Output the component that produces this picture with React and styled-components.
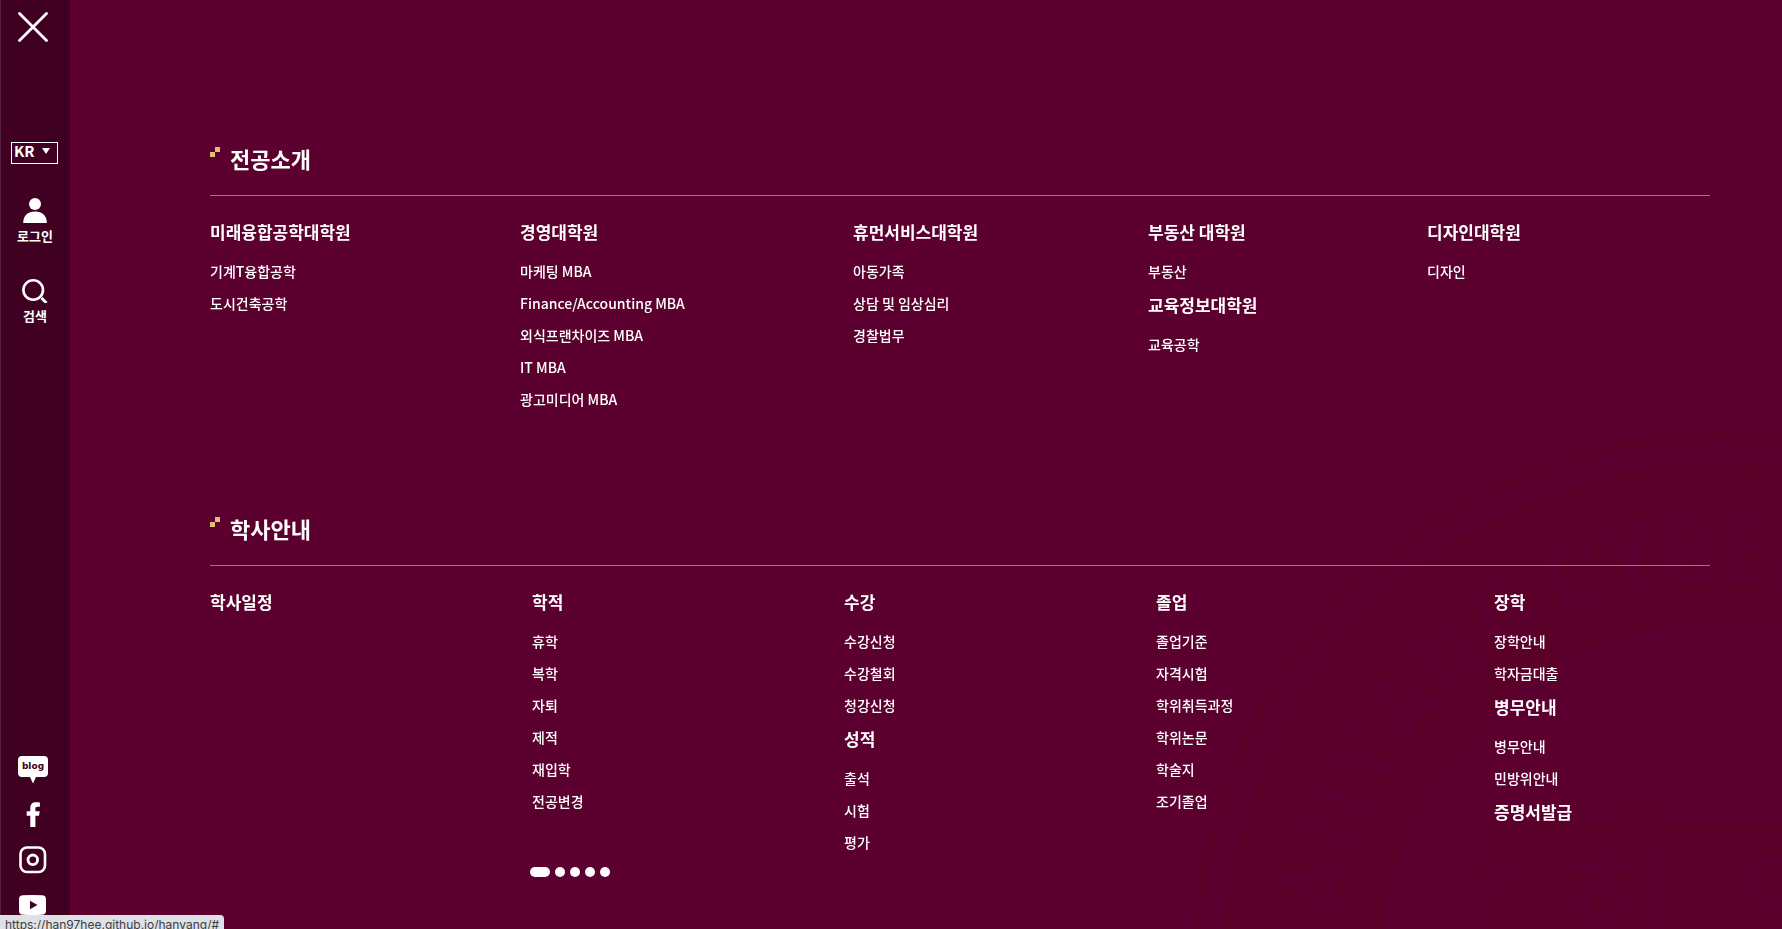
import React from "react";
import styled, { createGlobalStyle } from "styled-components";

const GlobalStyle = createGlobalStyle`
  *, *::before, *::after { box-sizing: border-box; }
  body {
    margin: 0;
    background: #5c002f;
    color: #fff;
    font-family: "Noto Sans CJK KR", "Noto Sans", sans-serif;
  }
  ul { margin: 0; padding: 0; list-style: none; }
  a { color: inherit; text-decoration: none; }
  button { padding: 0; border: 0; background: none; color: inherit; font: inherit; cursor: pointer; }
`;

const Page = styled.div`
  display: flex;
  min-height: 100vh;
`;

const Sidebar = styled.aside`
  position: sticky;
  top: 0;
  flex: none;
  display: flex;
  flex-direction: column;
  align-items: center;
  width: 70px;
  height: 100vh;
  padding: 10px 0 9px;
  box-shadow: inset 1px 0 #521f3b;
  background: #400022;
  overflow: hidden;
`;

const RailIcon = styled.svg`
  display: block;
  flex: none;
`;

const CloseButton = styled.button`
  margin-right: 4px;
`;

const Language = styled.label`
  display: grid;
  align-items: center;
  margin: 98px 1px 32px 0;
`;

const LanguageSelect = styled.select`
  grid-area: 1 / 1;
  width: 47px;
  height: 22px;
  padding: 0 0 4px 2px;
  border: 1px solid #fff;
  border-radius: 0;
  appearance: none;
  background: transparent;
  color: #fff;
  font: 700 15px/16px "Noto Sans CJK KR", sans-serif;
`;

const Caret = styled.svg`
  grid-area: 1 / 1;
  justify-self: end;
  margin: 0 8px 4px 0;
  pointer-events: none;
`;

const RailButton = styled.button`
  display: flex;
  flex-direction: column;
  align-items: center;
  margin-bottom: 30px;
  font-weight: 700;
  font-size: 13px;
  line-height: 20px;
`;

const RailLabel = styled.span`
  margin-top: 3px;
`;

const SocialLinks = styled.nav`
  display: flex;
  flex-direction: column;
  gap: 15px;
  margin-top: auto;
  margin-right: 4px;
`;

const BlogText = styled.text`
  fill: #400022;
  font: 700 9px "DejaVu Sans", sans-serif;
  text-anchor: middle;
`;

const Main = styled.main`
  position: relative;
  z-index: 1;
  flex: 1;
  min-width: 0;
  padding: 141px 72px 0 140px;
`;

const Section = styled.section`
  & + & { margin-top: 96px; }
`;

const SectionTitle = styled.h2`
  display: flex;
  align-items: flex-start;
  gap: 10px;
  margin: 0;
  padding-bottom: 20px;
  border-bottom: 1px solid #8c8086;
  font-weight: 700;
  font-size: 22px;
  line-height: 34px;
`;

const TitleMark = styled.svg`
  flex: none;
  margin-top: 6px;
`;

const Columns = styled.div`
  display: grid;
  grid-template-columns: ${(p) => p.$tracks};
  padding-top: 18px;
`;

const GroupTitle = styled.h3`
  margin: 0 0 5px;
  font-weight: 700;
  font-size: 17px;
  line-height: 36px;
`;

const MenuItem = styled.li`
  font-weight: 500;
  font-size: 14px;
  line-height: 32px;
`;

const Pager = styled.div`
  display: flex;
  gap: 5px;
  margin: 9px 0 0 320px;
`;

const Dot = styled.button`
  width: ${(p) => (p.$active ? 20 : 10)}px;
  height: 10px;
  border-radius: 5px;
  background: #fff;
`;

const Seal = styled.svg`
  position: fixed;
  right: 0;
  bottom: 0;
`;

const SealLetter = styled.text`
  fill: #5c002f;
  font: 700 102px "Roboto Condensed", Roboto, sans-serif;
  text-anchor: middle;
`;

const SealHangul = styled.text`
  fill: #5c002f;
  font: 700 132px "Noto Sans CJK KR", sans-serif;
`;

const StatusBar = styled.div`
  position: fixed;
  left: 0;
  bottom: 0;
  z-index: 2;
  height: 14px;
  padding: 2px 5px 0;
  border-top-right-radius: 4px;
  background: #dee1e6;
  color: #3c4043;
  font: 400 12px/16px Inter, Roboto, sans-serif;
  white-space: nowrap;
  overflow: hidden;
`;

const SECTIONS = [
  {
    title: "전공소개",
    tracks: "310fr 333fr 295fr 279fr 283fr",
    columns: [
      [{ name: "미래융합공학대학원", items: ["기계T융합공학", "도시건축공학"] }],
      [
        {
          name: "경영대학원",
          items: ["마케팅 MBA", "Finance/Accounting MBA", "외식프랜차이즈 MBA", "IT MBA", "광고미디어 MBA"],
        },
      ],
      [{ name: "휴먼서비스대학원", items: ["아동가족", "상담 및 임상심리", "경찰법무"] }],
      [
        { name: "부동산 대학원", items: ["부동산"] },
        { name: "교육정보대학원", items: ["교육공학"] },
      ],
      [{ name: "디자인대학원", items: ["디자인"] }],
    ],
  },
  {
    title: "학사안내",
    tracks: "322fr 312fr 312fr 338fr 216fr",
    columns: [
      [{ name: "학사일정", items: [] }],
      [{ name: "학적", items: ["휴학", "복학", "자퇴", "제적", "재입학", "전공변경"] }],
      [
        { name: "수강", items: ["수강신청", "수강철회", "청강신청"] },
        { name: "성적", items: ["출석", "시험", "평가"] },
      ],
      [{ name: "졸업", items: ["졸업기준", "자격시험", "학위취득과정", "학위논문", "학술지", "조기졸업"] }],
      [
        { name: "장학", items: ["장학안내", "학자금대출"] },
        { name: "병무안내", items: ["병무안내", "민방위안내"] },
        { name: "증명서발급", items: [] },
      ],
    ],
  },
];

const SEAL_LETTERS = [
  ["H", -88],
  ["A", -79],
  ["N", -69],
  ["Y", -60],
  ["A", -51],
  ["N", -42],
  ["G", -32],
  ["C", -21],
  ["Y", -13],
  ["B", -5],
  ["E", 3],
  ["R", 11],
];

function MenuSection({ section }) {
  return (
    <Section>
      <SectionTitle>
        <TitleMark width="10" height="10" aria-hidden="true">
          <path d="M5 0h5v5H5zM0 5h5v5H0z" fill="#e0c078" />
        </TitleMark>
        {section.title}
      </SectionTitle>
      <Columns $tracks={section.tracks}>
        {section.columns.map((groups) => (
          <div key={groups[0].name}>
            {groups.map((group) => (
              <React.Fragment key={group.name}>
                <GroupTitle>
                  <a href="#">{group.name}</a>
                </GroupTitle>
                <ul>
                  {group.items.map((item) => (
                    <MenuItem key={item}>
                      <a href="#">{item}</a>
                    </MenuItem>
                  ))}
                </ul>
              </React.Fragment>
            ))}
          </div>
        ))}
      </Columns>
    </Section>
  );
}

// The seal's coordinates start at the centre of its circles.
function UniversitySeal() {
  return (
    <Seal width="597" height="504" viewBox="-540 -540 597 504" aria-hidden="true">
      <circle r="529" fill="none" stroke="#5b0028" strokeWidth="7" />
      <circle r="423" fill="none" stroke="#5b0028" strokeWidth="158" />
      {SEAL_LETTERS.map(([letter, angle]) => (
        <SealLetter key={angle} y="-381" transform={`rotate(${angle})`}>
          {letter}
        </SealLetter>
      ))}
      <path
        d="M60 -158H-46V-174H-122V-158H-250V-90H-240Q-254 -66 -260 -30"
        fill="none"
        stroke="#5b0028"
        strokeWidth="4"
      />
      <path d="M60 -144H-64V-161H-112V-144H-238V-103H-198Q-230 -82 -243 -30H60Z" fill="#5b0028" />
      <SealHangul x="-166" y="-8">한</SealHangul>
      <SealHangul x="14" y="-8">양</SealHangul>
    </Seal>
  );
}

export default function App() {
  return (
    <>
      <GlobalStyle />
      <Page>
        <UniversitySeal />
        <Sidebar>
          <CloseButton aria-label="닫기">
            <RailIcon width="30" height="34" viewBox="0 0 30 34">
              <path d="M1.5 3.5l27 27M28.5 3.5l-27 27" stroke="#fff" strokeWidth="2.8" strokeLinecap="round" />
            </RailIcon>
          </CloseButton>
          <Language>
            <LanguageSelect aria-label="언어" defaultValue="KR">
              <option>KR</option>
            </LanguageSelect>
            <Caret width="8" height="6" aria-hidden="true">
              <path d="M0 0h8L4 6z" fill="#fff" />
            </Caret>
          </Language>
          <RailButton>
            <RailIcon width="26" height="27" viewBox="0 0 26 27" fill="#fff">
              <circle cx="13" cy="8" r="6" />
              <path d="M1.2 27C1.2 19.5 5.5 15.4 13 15.4S24.8 19.5 24.8 27z" />
            </RailIcon>
            <RailLabel>로그인</RailLabel>
          </RailButton>
          <RailButton>
            <RailIcon width="26" height="27" viewBox="0 0 26 27" fill="none" stroke="#fff" strokeWidth="2.6">
              <circle cx="11.2" cy="14" r="9.8" />
              <path d="M19.5 22l5 5" strokeWidth="2.8" />
            </RailIcon>
            <RailLabel>검색</RailLabel>
          </RailButton>
          <SocialLinks>
            <a href="#" aria-label="블로그">
              <RailIcon width="30" height="30" viewBox="0 0 30 30">
                <path d="M4 1h22q4 0 4 4v13q0 4-4 4h-8l-3 6.5L12 22H4q-4 0-4-4V5q0-4 4-4z" fill="#fff" />
                <BlogText x="15" y="14">blog</BlogText>
              </RailIcon>
            </a>
            <a href="#" aria-label="페이스북">
              <RailIcon width="30" height="30" viewBox="0 0 30 30">
                <path
                  d="M12.3 27V15.8H8.7v-4.5h3.6V8.2C12.3 4.3 14.4 2.3 18 2.3c1.6 0 3.9.2 3.9.2v4.2h-2.4c-1.6 0-2.1.9-2.1 2v2.6h4.3l-.7 4.5h-3.6V27z"
                  fill="#fff"
                />
              </RailIcon>
            </a>
            <a href="#" aria-label="인스타그램">
              <RailIcon width="30" height="30" viewBox="0 0 30 30" fill="none" stroke="#fff">
                <rect x="2.5" y="2.5" width="24.5" height="24.5" rx="6.5" strokeWidth="2.6" />
                <circle cx="14.8" cy="14.8" r="4.8" strokeWidth="2.8" />
              </RailIcon>
            </a>
            <a href="#" aria-label="유튜브">
              <RailIcon width="30" height="30" viewBox="0 0 30 30">
                <path
                  fillRule="evenodd"
                  d="M5 5.2q10-.6 19 0 4 .2 4 4v11.5q0 3.8-4 4-9 .6-19 0-4-.2-4-4V9.2q0-3.8 4-4zM12 10.7v8.6l7.5-4.3z"
                  fill="#fff"
                />
              </RailIcon>
            </a>
          </SocialLinks>
        </Sidebar>
        <Main>
          {SECTIONS.map((section) => (
            <MenuSection key={section.title} section={section} />
          ))}
          <Pager>
            {[1, 2, 3, 4, 5].map((page) => (
              <Dot key={page} $active={page === 1} aria-label={`${page}`} />
            ))}
          </Pager>
        </Main>
        <StatusBar>https://han97hee.github.io/hanyang/#</StatusBar>
      </Page>
    </>
  );
}
